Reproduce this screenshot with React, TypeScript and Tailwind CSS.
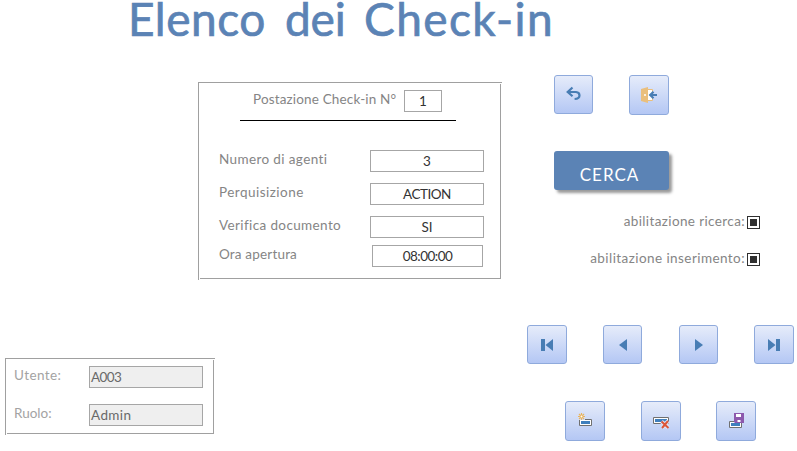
import type { ReactNode } from "react";

const textFont = "font-['Lato','Noto_Sans',sans-serif]";

function IconButton({ className = "", label, children }: { className?: string; label: string; children: ReactNode }) {
  return (
    <button
      aria-label={label}
      className={`flex shrink-0 items-center justify-center rounded-[3px] border border-[#8faadc] bg-linear-to-b from-[#e6ecfa] to-[#b4c7f4] ${className}`}
    >
      {children}
    </button>
  );
}

function EtchedFrame({ className, children }: { className: string; children: ReactNode }) {
  return (
    <section className={`border-t border-l border-[#a0a0a0] p-px ${className}`}>
      <div className="h-full border-r border-b border-[#a0a0a0]">{children}</div>
    </section>
  );
}

function Field({ label, value, spacing, valueSpacing = "", className, box = "mr-[16px] w-[114px]" }: { label: string; value: string; spacing: string; valueSpacing?: string; className: string; box?: string }) {
  return (
    <div className={`flex h-[22px] justify-between pl-[19px] ${className}`}>
      <span className={`leading-[19px] whitespace-nowrap text-[#858585] ${spacing}`}>{label}</span>
      <span className={`border border-[#a6a6a6] text-center leading-[20px] text-[#333333] ${box} ${valueSpacing}`}>{value}</span>
    </div>
  );
}

function Check({ label, className, spacing }: { label: string; className: string; spacing: string }) {
  return (
    <div className={`flex h-[18px] items-center justify-end pr-[37px] ${className}`}>
      <span className={`whitespace-nowrap text-[#858585] ${spacing}`}>{label}</span>
      <span className="mt-[2px] ml-[2px] flex size-[13px] items-center justify-center border border-[#303030]">
        <span className="size-[7px] bg-[#303030]" />
      </span>
    </div>
  );
}

export default function App() {
  return (
    <main className={`flex h-[451px] w-[797px] flex-col overflow-hidden bg-white text-[13.5px] ${textFont}`}>
      <h1 className="flex h-[50px] shrink-0 pl-[128px] text-[46px] leading-[37px] whitespace-nowrap text-[#5b83b5] [-webkit-text-stroke:0.7px_#5b83b5]">
        <span className="w-[157px] tracking-[0.5px]">Elenco</span>
        <span className="w-[79px] tracking-[-0.2px]">dei</span>
        <span className="tracking-[1.4px]">Check-in</span>
      </h1>
      <div className="flex h-[401px]">
        <div className="w-[527px] pt-[32px]">
          <EtchedFrame className="ml-[198px] h-[198px] w-[304px]">
            <div className="flex h-[28px] pt-[6px] pl-[53px]">
              <span className="w-[151px] leading-[19px] tracking-[0.16px] whitespace-nowrap text-[#858585]">Postazione Check-in N°</span>
              <span className="h-[22px] w-[38px] border border-[#a6a6a6] text-center leading-[20px] text-[#333333]">1</span>
            </div>
            <div className="mt-[8px] ml-[40px] h-px w-[216px] bg-black" />
            <Field className="mt-[29px]" label="Numero di agenti" value="3" spacing="tracking-[0.38px]" />
            <Field className="mt-[11px]" label="Perquisizione" value="ACTION" spacing="tracking-[0.48px]" valueSpacing="tracking-[-0.5px]" />
            <Field className="mt-[11px]" label="Verifica documento" value="SI" spacing="tracking-[0.38px]" />
            <Field className="mt-[7px]" label="Ora apertura" value="08:00:00" spacing="tracking-[0.18px]" valueSpacing="tracking-[-0.5px]" box="mr-[17px] w-[111px]" />
          </EtchedFrame>
          <EtchedFrame className="mt-[78px] ml-[5px] h-[77px] w-[210px]">
            <div className="flex pt-[6px] pl-[7px]">
              <span className="w-[75px] leading-[19px] tracking-[0.4px] text-[#a3a3a3]">Utente:</span>
              <span className="h-[22px] w-[114px] border border-[#a6a6a6] bg-[#efefef] pl-px leading-[20px] tracking-[-0.6px] text-[#696969]">A003</span>
            </div>
            <div className="flex pt-[16px] pl-[7px]">
              <span className="w-[75px] leading-[19px] text-[#a3a3a3]">Ruolo:</span>
              <span className="h-[22px] w-[114px] border border-[#a6a6a6] bg-[#efefef] pl-px leading-[20px] tracking-[0.4px] text-[#696969]">Admin</span>
            </div>
          </EtchedFrame>
        </div>
        <div className="w-[270px] pt-[25px]">
          <div className="flex h-[40px] gap-[36px] pl-[27px]">
            <IconButton label="Annulla" className="h-[39px] w-[39px]">
              <svg width="17" height="17" viewBox="0 0 17 17" fill="none" stroke="#487db4" strokeWidth="2.2">
                <path d="M2.5 6H11Q14.5 6.3 14.5 9.5Q14.4 12.8 9.6 13" />
                <path d="M7.5 1.5L2.7 6L7.5 10.3" />
              </svg>
            </IconButton>
            <IconButton label="Esci" className="h-[40px] w-[40px]">
              <svg width="18" height="18" viewBox="0 0 18 18">
                <path d="M8 3.5H12.5V14.5H8" fill="#fff" stroke="#eabf7d" />
                <path d="M1 3L8 1V17L1 15Z" fill="#eabf7d" />
                <circle cx="5" cy="9" r="1" fill="#fff" />
                <path d="M17 9H11M13.5 5.8L10.2 9L13.5 12.2" fill="none" stroke="#487db4" strokeWidth="2.2" />
              </svg>
            </IconButton>
          </div>
          <button className="mt-[36px] ml-[27px] block h-[39px] w-[115px] rounded-[3px] bg-[#5b83b5] pt-[8px] pr-[4px] text-center text-[17px] leading-[31px] tracking-[1px] text-white shadow-[3px_3px_3px_rgba(0,0,0,0.4)]">
            CERCA
          </button>
          <Check className="mt-[22px]" label="abilitazione ricerca:" spacing="tracking-[0.38px]" />
          <Check className="mt-[19px]" label="abilitazione inserimento:" spacing="tracking-[0.43px]" />
          <div className="mt-[58px] flex h-[39px]">
            <IconButton label="Primo" className="mr-[36px] h-[39px] w-[40px]">
              <svg width="12" height="12" viewBox="0 0 12 12" fill="#487db4"><path d="M0 0H4V12H0ZM12 0V12L4.5 6Z" /></svg>
            </IconButton>
            <IconButton label="Precedente" className="mr-[37px] h-[39px] w-[39px]">
              <svg width="8" height="12" viewBox="0 0 8 12" fill="#487db4"><path d="M8 0V12L0 6Z" /></svg>
            </IconButton>
            <IconButton label="Successivo" className="mr-[36px] h-[39px] w-[39px]">
              <svg width="8" height="12" viewBox="0 0 8 12" fill="#487db4"><path d="M0 0V12L8 6Z" /></svg>
            </IconButton>
            <IconButton label="Ultimo" className="h-[39px] w-[40px]">
              <svg width="12" height="12" viewBox="0 0 12 12" fill="#487db4"><path d="M8 0H12V12H8ZM0 0V12L7.5 6Z" /></svg>
            </IconButton>
          </div>
          <div className="mt-[37px] flex h-[40px] pl-[38px]">
            <IconButton label="Nuovo" className="mr-[36px] h-[40px] w-[40px]">
              <svg width="16" height="16" viewBox="0 0 16 16">
                <path d="M2.5 6.5H14.5V12.5H2.5Z" fill="#fff" stroke="#707070" />
                <path d="M4 8H13V11H4Z" fill="#3f7fbd" />
                <path d="M1 0H8V7H1Z" fill="#d5dff8" />
                <path d="M4.5 0V7M1 3.5H8M2 1L7 6M7 1L2 6" stroke="#eab45c" strokeWidth="1.1" />
                <circle cx="4.5" cy="3.5" r="1" fill="#fff" />
              </svg>
            </IconButton>
            <IconButton label="Elimina" className="mr-[35px] h-[40px] w-[40px]">
              <svg width="18" height="16" viewBox="0 0 18 16">
                <path d="M1.5 4.5H16.5V10.5H1.5Z" fill="#fff" stroke="#707070" />
                <path d="M3 6H15V9H3Z" fill="#3f7fbd" />
                <path d="M9.5 8.5L16.5 15M16 8L10 15" stroke="#dce4fa" strokeWidth="4" />
                <path d="M9.5 8.5L16.5 15M16 8L10 15" stroke="#dc5638" strokeWidth="2" />
              </svg>
            </IconButton>
            <IconButton label="Salva" className="h-[40px] w-[40px]">
              <svg width="16" height="16" viewBox="0 0 16 16">
                <path d="M1.5 8.5H13.5V14.5H1.5Z" fill="#fff" stroke="#707070" />
                <path d="M3 10H12V13H3Z" fill="#3f7fbd" />
                <path d="M6 0H16V10H7L6 9Z" fill="#8c59ad" />
                <path d="M8 1H13V4H8ZM9.5 7H12.5V9H9.5Z" fill="#fff" />
              </svg>
            </IconButton>
          </div>
        </div>
      </div>
    </main>
  );
}
